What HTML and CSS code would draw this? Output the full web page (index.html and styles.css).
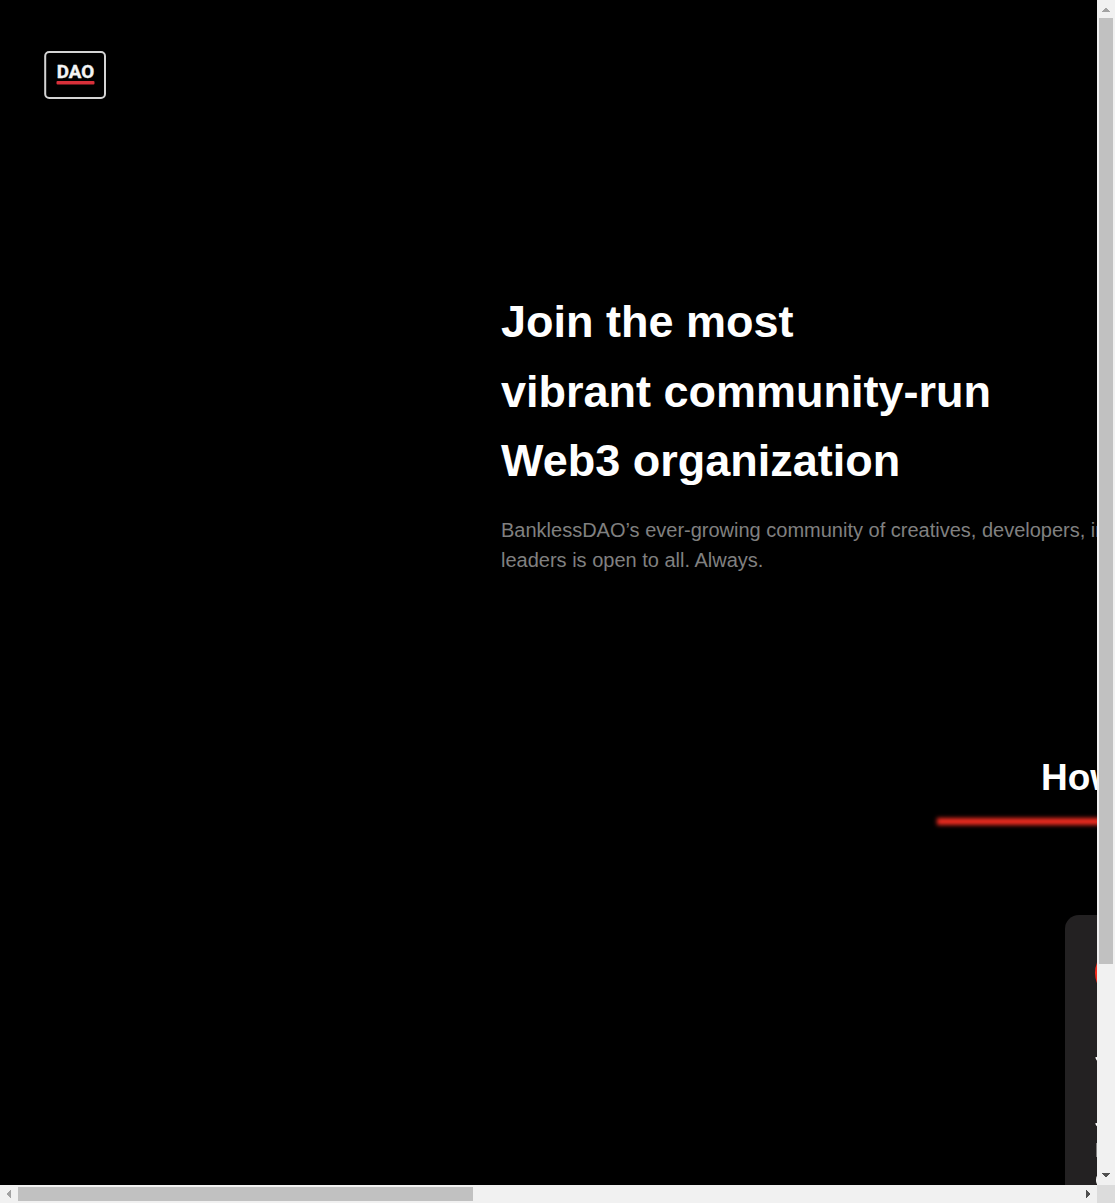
FILE: index.html
```html
<!DOCTYPE html>
<html lang="en">
<head>
<meta charset="utf-8">
<title>BanklessDAO</title>
<link rel="stylesheet" href="styles.css">
</head>
<body>
<div class="window">
  <main class="page">
    <header class="site-header">
      <svg class="logo" width="62" height="48" viewBox="0 0 62 48" role="img" aria-label="DAO">
        <rect class="logo-frame" x="1.2" y="1" width="59.8" height="46" rx="4"/>
        <text class="logo-text" x="12.8" y="27" textLength="37.4" lengthAdjust="spacingAndGlyphs">DAO</text>
        <rect class="logo-line" x="12.5" y="30" width="38" height="3.6" rx="1"/>
      </svg>
    </header>
    <section class="hero">
      <h1 class="hero-title">Join the most<br>vibrant community-run<br>Web3 organization</h1>
      <p class="hero-text">BanklessDAO’s ever-growing community of creatives, developers, in<br>leaders is open to all. Always.</p>
    </section>
    <section class="how">
      <h2 class="how-title">How</h2>
      <div class="how-line"></div>
      <article class="card">
        <div class="card-badge"></div>
        <h3 class="card-title">J</h3>
        <p class="card-text">J<br>L<br>C</p>
      </article>
    </section>
  </main>
  <div class="scrollbar vertical">
    <svg class="arrow" width="18" height="18" viewBox="0 0 18 18"><path class="idle" d="M8 8h2v1h1v1h1v1h1v1H5v-1h1v-1h1V9h1V8z"/></svg>
    <div class="thumb"></div>
    <svg class="arrow end" width="18" height="18" viewBox="0 0 18 18"><path class="active" d="M5 6h8v1h-1v1h-1v1h-1v1H8V9H7V8H6V7H5z"/></svg>
  </div>
  <div class="scrollbar horizontal">
    <svg class="arrow" width="18" height="18" viewBox="0 0 18 18"><path class="idle" d="M11 5v8h-1v-1H9v-1H8v-1H7V8h1V7h1V6h1V5z"/></svg>
    <div class="thumb"></div>
    <svg class="arrow end" width="18" height="18" viewBox="0 0 18 18"><path class="active" d="M7 5v8h1v-1h1v-1h1v-1h1V8h-1V7H9V6H8V5z"/></svg>
  </div>
  <div class="corner"></div>
</div>
</body>
</html>
```
FILE: styles.css
```css
* { box-sizing: border-box; }

body {
  margin: 0;
  overflow: hidden;
  background: #000;
  color: #fff;
  font-family: "Liberation Sans", Arial, sans-serif;
}

h1, h2, h3, p { margin: 0; }

.window {
  display: grid;
  grid-template: 1185px 18px / 1097px 18px;
  width: 1115px;
  height: 1203px;
}

.page {
  overflow: hidden;
  background: #000;
}

.site-header {
  height: 287px;
  padding: 51px 0 0 44px;
}

.logo { display: block; }
.logo-frame { fill: #000; stroke: #d4d4d4; stroke-width: 2; }
.logo-text { fill: #f4f4f4; stroke: #f4f4f4; stroke-width: 0.4; font: bold 18px Roboto, sans-serif; }
.logo-line { fill: #d8303a; }

.hero {
  height: 470px;
  padding-left: 501px;
  white-space: nowrap;
}

.hero-title {
  font-size: 45px;
  line-height: 69.5px;
}

.hero-text {
  margin-top: 19px;
  color: #808080;
  font-size: 20px;
  line-height: 30px;
}

.how-title {
  padding-left: 1041px;
  font-size: 37px;
  line-height: 42px;
}

.how-line {
  width: 400px;
  height: 7px;
  margin: 19px 0 0 937px;
  background: #f02c20;
  filter: blur(2px);
}

.card {
  width: 360px;
  height: 500px;
  margin: 90px 0 0 1065px;
  padding: 30px;
  border-radius: 14px;
  background: #232122;
  will-change: transform;
}

.card-badge {
  width: 56px;
  height: 56px;
  border-radius: 50%;
  background: #f52a1c;
}

.card-title {
  margin-top: 35px;
  font-size: 24px;
  line-height: 36px;
}

.card-text {
  margin-top: 33px;
  font-size: 20px;
  line-height: 30px;
}

.scrollbar {
  display: flex;
  background: #f1f1f1;
}

.vertical { flex-direction: column; }
.arrow { display: block; flex: none; }
.end { margin-top: auto; }
.horizontal .end { margin: 0 0 0 auto; }
.idle { fill: #a3a3a3; }
.active { fill: #505050; }
.thumb { background: #c1c1c1; }
.vertical .thumb { width: 14px; height: 946px; margin-left: 2px; }
.horizontal .thumb { width: 455px; height: 14px; margin-top: 2px; }
.corner { background: #dcdcdc; }
```
